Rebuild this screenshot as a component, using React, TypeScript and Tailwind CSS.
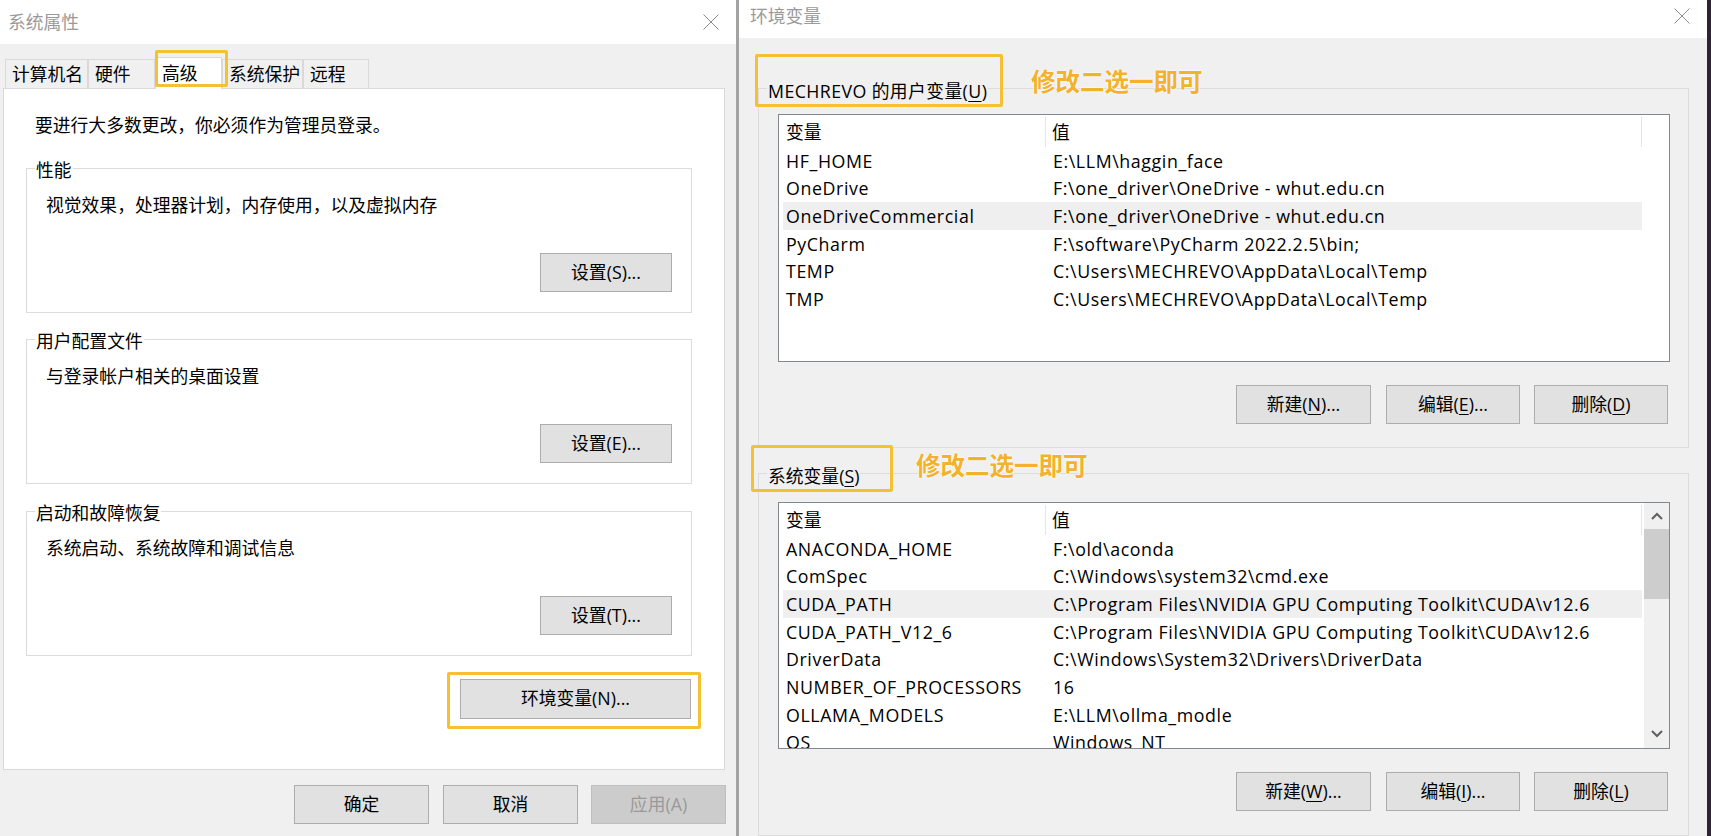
import React from 'react';

const FONT = "font-['Open_Sans','Noto_Sans_CJK_SC',sans-serif]";

const userVars: [string, string][] = [
  ['HF_HOME', 'E:\\LLM\\haggin_face'],
  ['OneDrive', 'F:\\one_driver\\OneDrive - whut.edu.cn'],
  ['OneDriveCommercial', 'F:\\one_driver\\OneDrive - whut.edu.cn'],
  ['PyCharm', 'F:\\software\\PyCharm 2022.2.5\\bin;'],
  ['TEMP', 'C:\\Users\\MECHREVO\\AppData\\Local\\Temp'],
  ['TMP', 'C:\\Users\\MECHREVO\\AppData\\Local\\Temp'],
];

const sysVars: [string, string][] = [
  ['ANACONDA_HOME', 'F:\\old\\aconda'],
  ['ComSpec', 'C:\\Windows\\system32\\cmd.exe'],
  ['CUDA_PATH', 'C:\\Program Files\\NVIDIA GPU Computing Toolkit\\CUDA\\v12.6'],
  ['CUDA_PATH_V12_6', 'C:\\Program Files\\NVIDIA GPU Computing Toolkit\\CUDA\\v12.6'],
  ['DriverData', 'C:\\Windows\\System32\\Drivers\\DriverData'],
  ['NUMBER_OF_PROCESSORS', '16'],
  ['OLLAMA_MODELS', 'E:\\LLM\\ollma_modle'],
  ['OS', 'Windows_NT'],
];

const tabs = [
  { label: '计算机名', w: 'w-[83px]' },
  { label: '硬件', w: 'w-[67px]' },
  { label: '高级', w: 'w-[67px]', active: true },
  { label: '系统保护', w: 'w-[81px]' },
  { label: '远程', w: 'w-[66px]' },
];

function CloseIcon() {
  return (
    <svg width="16" height="16" viewBox="0 0 16 16">
      <path d="M0.5 0.5 L15.5 15.5 M15.5 0.5 L0.5 15.5" stroke="#8a8a8a" strokeWidth="1" fill="none" />
    </svg>
  );
}

function Btn({ className = '', disabled, children }: { className?: string; disabled?: boolean; children: React.ReactNode }) {
  return (
    <div
      className={`flex h-[39px] items-center justify-center border leading-none ${
        disabled ? 'border-[#bfbfbf] bg-[#cccccc] text-[#9a9a9a]' : 'border-[#adadad] bg-[#e1e1e1] text-black'
      } ${className}`}
    >
      {children}
    </div>
  );
}

function U({ children }: { children: React.ReactNode }) {
  return <span className="underline decoration-1 underline-offset-[3px]">{children}</span>;
}

function GroupBox({ title, desc, btn }: { title: string; desc: string; btn: React.ReactNode }) {
  return (
    <div className="relative ml-[22px] flex h-[145px] w-[666px] flex-col border border-[#dcdcdc] px-[19px] pt-[24px]">
      <div className="absolute left-[8px] top-[-11px] bg-white px-[1px] leading-[24px]">{title}</div>
      <div className="leading-[24px]">{desc}</div>
      <Btn className="mt-[36px] w-[132px] self-end">{btn}</Btn>
    </div>
  );
}

function VarTable({ rows, active, scroll, h }: { rows: [string, string][]; active: number; scroll?: boolean; h: string }) {
  return (
    <div className={`flex w-[892px] overflow-hidden border border-[#828790] bg-white ${h}`}>
      <div className="flex w-[863px] flex-col">
        <div className="flex h-[32px] shrink-0 items-center pt-[2px]">
          <div className="flex h-full w-[267px] items-center border-r border-[#e5e5e5] pl-[7px]">变量</div>
          <div className="flex h-full flex-1 items-center border-r border-[#e5e5e5] pl-[6px]">值</div>
        </div>
        {rows.map(([k, v], i) => (
          <div
            key={k}
            className={`ml-[4px] flex h-[27.7px] shrink-0 items-center whitespace-nowrap tracking-[0.6px] ${
              i === active ? 'bg-[#efefef]' : ''
            }`}
          >
            <div className="w-[263px] pl-[3px]">{k}</div>
            <div className="pl-[7px]">{v}</div>
          </div>
        ))}
      </div>
      {scroll && (
        <div className="ml-auto flex w-[25px] flex-col bg-[#f0f0f0]">
          <div className="flex h-[26px] items-center justify-center">
            <svg width="12" height="8" viewBox="0 0 12 8">
              <path d="M1 7 L6 2 L11 7" stroke="#606060" strokeWidth="2" fill="none" />
            </svg>
          </div>
          <div className="h-[70px] bg-[#cdcdcd]" />
          <div className="flex-1" />
          <div className="mb-[1px] flex h-[26px] items-center justify-center">
            <svg width="12" height="8" viewBox="0 0 12 8">
              <path d="M1 1 L6 6 L11 1" stroke="#606060" strokeWidth="2" fill="none" />
            </svg>
          </div>
        </div>
      )}
    </div>
  );
}

function Note({ className }: { className: string }) {
  return (
    <div
      className={`absolute whitespace-nowrap text-[24.5px] font-bold leading-[30px] text-[#f2b22c] [text-shadow:0_0_2px_#fff,0_0_2px_#fff,0_0_1px_#fff] ${className}`}
    >
      修改二选一即可
    </div>
  );
}

export default function App() {
  return (
    <div className={`flex h-[836px] w-[1711px] overflow-hidden bg-[#2e2236] text-[17.8px] text-black ${FONT}`}>
      {/* 系统属性 */}
      <div className="flex w-[736px] shrink-0 flex-col bg-[#f0f0f0]">
        <div className="flex h-[44px] items-center justify-between bg-white pl-[8px] pr-[17px]">
          <span className="text-[#9a9a9a]">系统属性</span>
          <CloseIcon />
        </div>

        <div className="mt-[13px] flex h-[31px] items-end pl-[5px]">
          {tabs.map(t =>
            t.active ? (
              <div
                key={t.label}
                className={`relative z-10 -mb-px flex h-[32px] items-center border-x border-t border-[#d9d9d9] bg-white pl-[6px] ${t.w}`}
              >
                {t.label}
                <div className="absolute left-[-1px] top-[-8px] h-[37px] w-[73px] rounded-[2px] border-[3px] border-[#f5c032]" />
              </div>
            ) : (
              <div
                key={t.label}
                className={`flex h-[29px] items-center border-l border-t border-r border-[#d9d9d9] pl-[6px] ${t.w}`}
              >
                {t.label}
              </div>
            )
          )}
        </div>

        <div className="ml-[3px] flex h-[682px] w-[722px] flex-col border border-[#d9d9d9] bg-white pt-[24px]">
          <div className="ml-[31px] leading-[24px]">要进行大多数更改，你必须作为管理员登录。</div>
          <div className="mt-[31px]">
            <GroupBox title="性能" desc="视觉效果，处理器计划，内存使用，以及虚拟内存" btn="设置(S)..." />
          </div>
          <div className="mt-[26px]">
            <GroupBox title="用户配置文件" desc="与登录帐户相关的桌面设置" btn="设置(E)..." />
          </div>
          <div className="mt-[27px]">
            <GroupBox title="启动和故障恢复" desc="系统启动、系统故障和调试信息" btn="设置(T)..." />
          </div>
          <div className="relative mr-[33px] mt-[23px] self-end">
            <Btn className="h-[40px] w-[231px]">环境变量(N)...</Btn>
            <div className="absolute left-[-13px] top-[-7px] h-[57px] w-[254px] rounded-[2px] border-[3px] border-[#f5c032]" />
          </div>
        </div>

        <div className="mt-[15px] flex pl-[294px]">
          <Btn className="w-[135px]">确定</Btn>
          <Btn className="ml-[14px] w-[135px]">取消</Btn>
          <Btn className="ml-[13px] w-[135px]" disabled>
            应用(A)
          </Btn>
        </div>
      </div>

      <div className="w-[3px] shrink-0 bg-[#a3a3a3]" />

      {/* 环境变量 */}
      <div className="flex w-[968px] shrink-0 flex-col bg-[#f0f0f0]">
        <div className="flex h-[38px] items-start justify-between bg-white pl-[11px] pr-[17px] pt-[4px]">
          <span className="leading-[24px] text-[#9a9a9a]">环境变量</span>
          <div className="pt-[4px]">
            <CloseIcon />
          </div>
        </div>

        <div className="relative ml-[19px] mt-[50px] flex h-[360px] w-[931px] flex-col border border-[#dcdcdc] pl-[19px] pt-[25px]">
          <div className="absolute left-[8px] top-[-10px] bg-[#f0f0f0] px-[1px] leading-[24px] tracking-[0.4px]">
            MECHREVO 的用户变量(<U>U</U>)
          </div>
          <div className="absolute left-[-4px] top-[-35px] h-[53px] w-[248px] rounded-[2px] border-[3px] border-[#f5c032]" />
          <Note className="left-[272px] top-[-22px]" />
          <VarTable rows={userVars} active={2} h="h-[248px]" />
          <div className="mr-[20px] mt-[23px] flex justify-end">
            <Btn className="w-[135px]">
              新建(<U>N</U>)...
            </Btn>
            <Btn className="ml-[15px] w-[134px]">
              编辑(<U>E</U>)...
            </Btn>
            <Btn className="ml-[14px] w-[134px]">
              删除(<U>D</U>)
            </Btn>
          </div>
        </div>

        <div className="relative ml-[19px] mt-[25px] flex h-[363px] w-[931px] flex-col border border-[#dcdcdc] pl-[19px] pt-[28px]">
          <div className="absolute left-[8px] top-[-10px] bg-[#f0f0f0] px-[1px] leading-[24px]">
            系统变量(<U>S</U>)
          </div>
          <div className="absolute left-[-8px] top-[-29px] h-[47px] w-[142px] rounded-[2px] border-[3px] border-[#f5c032]" />
          <Note className="left-[157px] top-[-23px]" />
          <VarTable rows={sysVars} active={2} scroll h="h-[247px]" />
          <div className="mr-[20px] mt-[23px] flex justify-end">
            <Btn className="w-[135px]">
              新建(<U>W</U>)...
            </Btn>
            <Btn className="ml-[15px] w-[134px]">
              编辑(<U>I</U>)...
            </Btn>
            <Btn className="ml-[14px] w-[134px]">
              删除(<U>L</U>)
            </Btn>
          </div>
        </div>
      </div>
    </div>
  );
}
